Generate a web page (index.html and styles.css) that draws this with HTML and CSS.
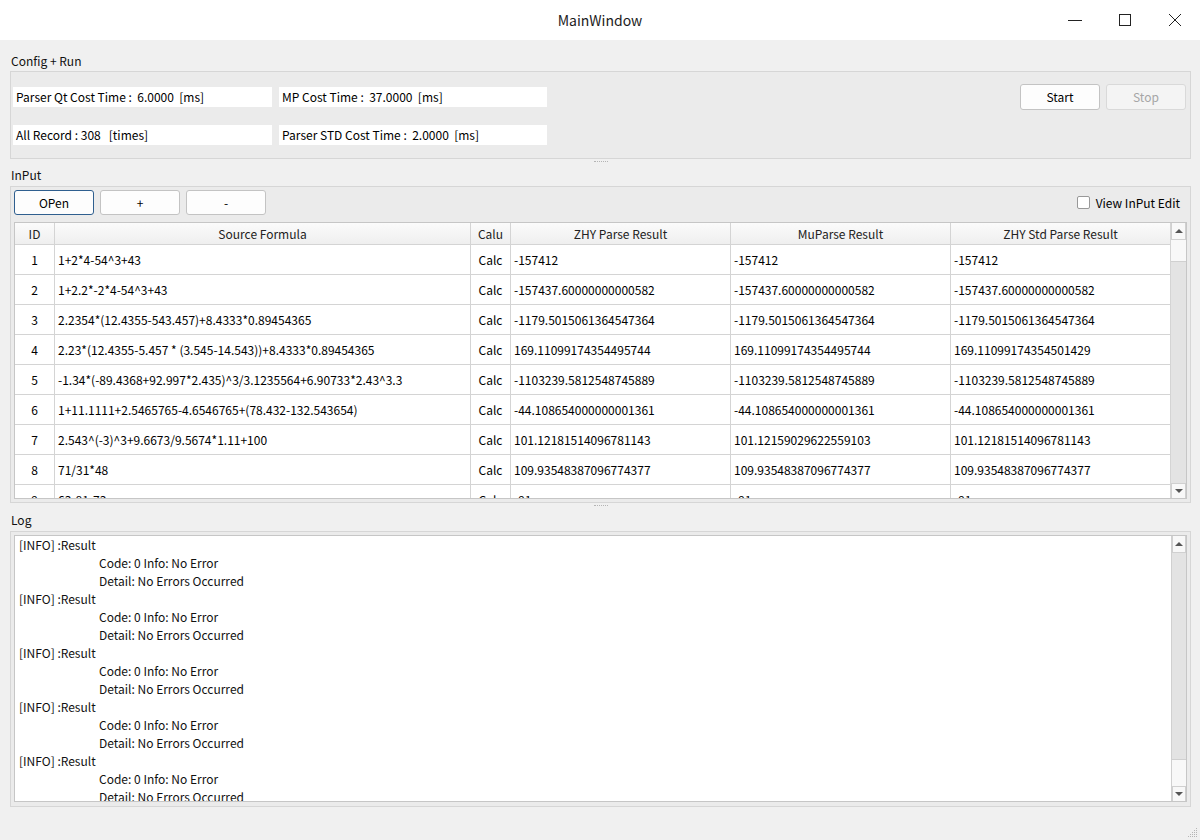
FILE: index.html
```html
<!DOCTYPE html>
<html>
<head>
<meta charset="utf-8">
<title>MainWindow</title>
<link rel="stylesheet" href="styles.css">
</head>
<body>
<div class="window">
  <div class="titlebar">
    <div></div>
    <div class="title">MainWindow</div>
    <div class="controls">
      <div class="ctl"><svg width="14" height="14" viewBox="0 0 14 14"><path d="M0 7.5H14" stroke="#222" stroke-width="1"/></svg></div>
      <div class="ctl"><svg width="14" height="14" viewBox="0 0 14 14"><rect x="1.5" y="1.5" width="11" height="11" fill="none" stroke="#222" stroke-width="1"/></svg></div>
      <div class="ctl"><svg width="14" height="14" viewBox="0 0 14 14"><path d="M1 1L13 13M13 1L1 13" stroke="#222" stroke-width="1"/></svg></div>
    </div>
  </div>

  <div class="content">
    <div class="section-label">Config + Run</div>
    <div class="group group-config">
      <div class="stats">
        <div class="stat">Parser Qt Cost Time :  6.0000  [ms]</div>
        <div class="stat">MP Cost Time :  37.0000  [ms]</div>
        <div class="stat">All Record : 308   [times]</div>
        <div class="stat">Parser STD Cost Time :  2.0000  [ms]</div>
      </div>
      <div class="run-buttons">
        <div class="btn">Start</div>
        <div class="btn disabled">Stop</div>
      </div>
    </div>

    <div class="splitter"><span class="dots"></span></div>
    <div class="section-label tall">InPut</div>
    <div class="group group-input">
      <div class="toolbar">
        <div class="btn focus">OPen</div>
        <div class="btn">+</div>
        <div class="btn">-</div>
        <div class="check">
          <span class="box"></span>
          <span>View InPut Edit</span>
        </div>
      </div>
      <div class="table">
        <div class="grid">
          <div class="row head">
            <div class="c c-id">ID</div>
            <div class="c c-src">Source Formula</div>
            <div class="c c-calu">Calu</div>
            <div class="c c-res">ZHY Parse Result</div>
            <div class="c c-res">MuParse Result</div>
            <div class="c c-res">ZHY Std Parse Result</div>
          </div>
          <div class="row">
            <div class="c c-id">1</div><div class="c c-src">1+2*4-54^3+43</div><div class="c c-calu">Calc</div>
            <div class="c c-res">-157412</div><div class="c c-res">-157412</div><div class="c c-res">-157412</div>
          </div>
          <div class="row">
            <div class="c c-id">2</div><div class="c c-src">1+2.2*-2*4-54^3+43</div><div class="c c-calu">Calc</div>
            <div class="c c-res">-157437.60000000000582</div><div class="c c-res">-157437.60000000000582</div><div class="c c-res">-157437.60000000000582</div>
          </div>
          <div class="row">
            <div class="c c-id">3</div><div class="c c-src">2.2354*(12.4355-543.457)+8.4333*0.89454365</div><div class="c c-calu">Calc</div>
            <div class="c c-res">-1179.5015061364547364</div><div class="c c-res">-1179.5015061364547364</div><div class="c c-res">-1179.5015061364547364</div>
          </div>
          <div class="row">
            <div class="c c-id">4</div><div class="c c-src">2.23*(12.4355-5.457 * (3.545-14.543))+8.4333*0.89454365</div><div class="c c-calu">Calc</div>
            <div class="c c-res">169.11099174354495744</div><div class="c c-res">169.11099174354495744</div><div class="c c-res">169.11099174354501429</div>
          </div>
          <div class="row">
            <div class="c c-id">5</div><div class="c c-src">-1.34*(-89.4368+92.997*2.435)^3/3.1235564+6.90733*2.43^3.3</div><div class="c c-calu">Calc</div>
            <div class="c c-res">-1103239.5812548745889</div><div class="c c-res">-1103239.5812548745889</div><div class="c c-res">-1103239.5812548745889</div>
          </div>
          <div class="row">
            <div class="c c-id">6</div><div class="c c-src">1+11.1111+2.5465765-4.6546765+(78.432-132.543654)</div><div class="c c-calu">Calc</div>
            <div class="c c-res">-44.108654000000001361</div><div class="c c-res">-44.108654000000001361</div><div class="c c-res">-44.108654000000001361</div>
          </div>
          <div class="row">
            <div class="c c-id">7</div><div class="c c-src">2.543^(-3)^3+9.6673/9.5674*1.11+100</div><div class="c c-calu">Calc</div>
            <div class="c c-res">101.12181514096781143</div><div class="c c-res">101.12159029622559103</div><div class="c c-res">101.12181514096781143</div>
          </div>
          <div class="row">
            <div class="c c-id">8</div><div class="c c-src">71/31*48</div><div class="c c-calu">Calc</div>
            <div class="c c-res">109.93548387096774377</div><div class="c c-res">109.93548387096774377</div><div class="c c-res">109.93548387096774377</div>
          </div>
          <div class="row">
            <div class="c c-id">9</div><div class="c c-src">63-81-73</div><div class="c c-calu">Calc</div>
            <div class="c c-res">-91</div><div class="c c-res">-91</div><div class="c c-res">-91</div>
          </div>
        </div>
        <div class="vscroll">
          <div class="arrow up"></div>
          <div class="handle handle-top"></div>
          <div class="track"></div>
          <div class="arrow down"></div>
        </div>
      </div>
    </div>

    <div class="splitter split2"><span class="dots"></span></div>
    <div class="section-label tall">Log</div>
    <div class="group group-log">
      <div class="logbox">
        <div class="logtext">
          <div class="ln">[INFO] :Result</div>
          <div class="ln ind">Code: 0 Info: No Error</div>
          <div class="ln ind">Detail: No Errors Occurred</div>
          <div class="ln">[INFO] :Result</div>
          <div class="ln ind">Code: 0 Info: No Error</div>
          <div class="ln ind">Detail: No Errors Occurred</div>
          <div class="ln">[INFO] :Result</div>
          <div class="ln ind">Code: 0 Info: No Error</div>
          <div class="ln ind">Detail: No Errors Occurred</div>
          <div class="ln">[INFO] :Result</div>
          <div class="ln ind">Code: 0 Info: No Error</div>
          <div class="ln ind">Detail: No Errors Occurred</div>
          <div class="ln">[INFO] :Result</div>
          <div class="ln ind">Code: 0 Info: No Error</div>
          <div class="ln ind">Detail: No Errors Occurred</div>
        </div>
        <div class="vscroll">
          <div class="arrow up"></div>
          <div class="track"></div>
          <div class="handle handle-bottom"></div>
          <div class="arrow down"></div>
        </div>
      </div>
    </div>
  </div>

  <svg class="grip" width="12" height="12" viewBox="0 0 12 12">
    <g fill="#b5b5b5">
      <rect x="10" y="2" width="1" height="1"/>
      <rect x="8" y="4" width="1" height="1"/><rect x="10" y="4" width="1" height="1"/>
      <rect x="6" y="6" width="1" height="1"/><rect x="8" y="6" width="1" height="1"/><rect x="10" y="6" width="1" height="1"/>
      <rect x="4" y="8" width="1" height="1"/><rect x="6" y="8" width="1" height="1"/><rect x="8" y="8" width="1" height="1"/><rect x="10" y="8" width="1" height="1"/>
      <rect x="2" y="10" width="1" height="1"/><rect x="4" y="10" width="1" height="1"/><rect x="6" y="10" width="1" height="1"/><rect x="8" y="10" width="1" height="1"/><rect x="10" y="10" width="1" height="1"/>
    </g>
  </svg>
</div>
</body>
</html>
```

FILE: styles.css
```css
* { box-sizing: border-box; }
html, body { margin: 0; padding: 0; }
body {
  width: 1200px;
  height: 840px;
  overflow: hidden;
  font-family: "Noto Sans CJK SC", "Noto Sans", sans-serif;
  font-size: 12px;
  color: #000;
  background: #f0f0f0;
}
.window {
  width: 1200px;
  height: 840px;
  display: flex;
  flex-direction: column;
  position: relative;
  background: #f0f0f0;
}

/* title bar */
.titlebar {
  height: 40px;
  flex: none;
  background: #fff;
  display: grid;
  grid-template-columns: 1fr auto 1fr;
  align-items: center;
}
.title { font-size: 14px; color: #1b1b1b; }
.controls { justify-self: end; display: flex; height: 40px; }
.ctl {
  width: 50px;
  height: 40px;
  display: flex;
  align-items: center;
  justify-content: center;
}

/* content */
.content {
  flex: 1;
  display: flex;
  flex-direction: column;
  padding: 10px 9px 0 10px;
}
.section-label {
  height: 21px;
  line-height: 21px;
  padding-left: 1px;
  color: #111;
}
.section-label.tall { height: 22px; line-height: 22px; }

.group {
  border: 1px solid #d6d6d6;
  background: #ebebeb;
}

/* config group */
.group-config {
  height: 88px;
  display: flex;
  align-items: flex-start;
  padding: 12px 4px 0 2px;
}
.stats {
  margin-top: 3px;
  display: grid;
  grid-template-columns: 259px 268px;
  column-gap: 7px;
  row-gap: 18px;
}
.stat {
  height: 20px;
  line-height: 20px;
  background: #fff;
  padding-left: 3px;
  white-space: pre;
}
.run-buttons {
  margin-left: auto;
  display: flex;
  gap: 6px;
}
.btn {
  width: 80px;
  height: 26px;
  line-height: 24px;
  text-align: center;
  background: #fdfdfd;
  border: 1px solid #c3c3c3;
  border-radius: 3px;
  color: #000;
}
.btn.disabled { color: #a6a6a6; border-color: #d9d9d9; background: #f4f4f4; }
.btn.focus { border-color: #2f5f8f; }

/* splitter */
.splitter {
  height: 5px;
  display: flex;
  justify-content: center;
  align-items: flex-start;
}
.split2 { height: 6px; }
.dots {
  margin-top: 2px;
  width: 14px;
  height: 1px;
  border-top: 1px dotted #b4b4b4;
}

/* input group */
.group-input {
  height: 317px;
  padding: 3px;
  display: flex;
  flex-direction: column;
}
.toolbar {
  height: 25px;
  display: flex;
  gap: 6px;
  align-items: center;
}
.toolbar .btn { height: 25px; line-height: 23px; }
.check {
  margin-left: auto;
  margin-right: 7px;
  display: flex;
  align-items: center;
  gap: 6px;
}
.box {
  width: 13px;
  height: 13px;
  background: #fff;
  border: 1px solid #999;
  border-radius: 2px;
}

.table {
  margin-top: 7px;
  height: 277px;
  border: 1px solid #c6c6c6;
  background: #fff;
  display: flex;
  overflow: hidden;
}
.grid { width: 1156px; flex: none; overflow: hidden; }
.row {
  display: flex;
  height: 30px;
  border-bottom: 1px solid #d4d4d4;
}
.row.head {
  height: 22px;
  background: linear-gradient(#fbfbfb, #efefef);
  color: #222;
}
.c {
  border-right: 1px solid #d4d4d4;
  display: flex;
  align-items: center;
  padding-left: 3px;
  white-space: nowrap;
  overflow: hidden;
}
.head .c { justify-content: center; padding-left: 0; }
.c-id { width: 40px; justify-content: center; padding-left: 0; }
.c-src { width: 416px; }
.c-calu { width: 40px; justify-content: center; padding-left: 0; }
.c-res { width: 220px; }

/* scrollbars */
.vscroll {
  width: 15px;
  flex: none;
  display: flex;
  flex-direction: column;
  background: #e3e3e3;
  border-left: 1px solid #d0d0d0;
}
.table .vscroll { border-left: none; }
.arrow {
  height: 17px;
  background: #f8f8f8;
  border: 1px solid #d0d0d0;
  display: flex;
  align-items: center;
  justify-content: center;
}
.arrow.up { border-top: none; }
.arrow.down { height: 15px; border-bottom: none; }
.arrow.up::before {
  content: "";
  border-left: 4px solid transparent;
  border-right: 4px solid transparent;
  border-bottom: 4px solid #555;
}
.arrow.down::before {
  content: "";
  border-left: 4px solid transparent;
  border-right: 4px solid transparent;
  border-top: 4px solid #555;
}
.handle {
  background: #f8f8f8;
  border: 1px solid #d0d0d0;
  border-left: none;
  border-right: none;
}
.handle-top { height: 22px; border-top: none; }
.handle-bottom { height: 27px; border-bottom: none; }
.track { flex: 1; background: #e3e3e3; }

/* log group */
.group-log {
  height: 276px;
  padding: 3px 3px 4px 3px;
}
.logbox {
  height: 267px;
  border: 1px solid #c6c6c6;
  background: #fff;
  display: flex;
  overflow: hidden;
}
.logtext {
  flex: 1;
  padding-left: 4px;
  overflow: hidden;
  color: #111;
}
.ln { height: 18px; line-height: 18px; white-space: nowrap; }
.ln.ind { padding-left: 80px; }
.logbox .vscroll { border-left: 1px solid #d0d0d0; }

.grip { position: absolute; right: 2px; bottom: 2px; }
```
